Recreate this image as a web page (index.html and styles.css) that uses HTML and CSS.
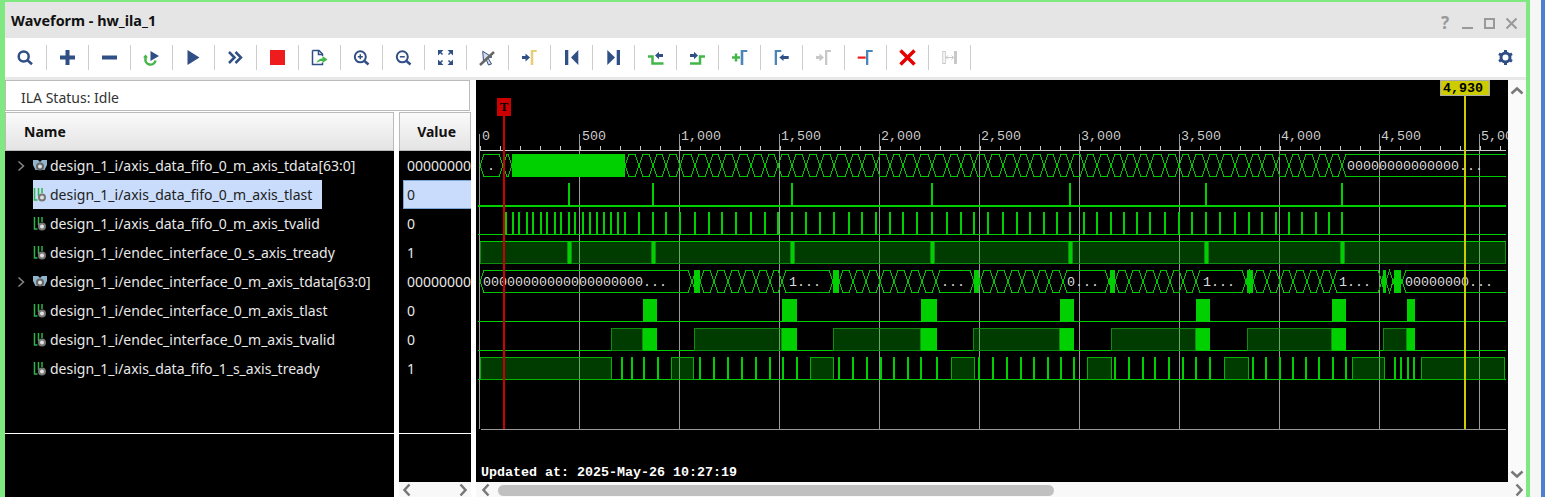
FILE: index.html
```html
<!DOCTYPE html>
<html lang="en">

<head>
    <meta charset="UTF-8">
    <title>Waveform - hw_ila_1</title>
    <link rel="stylesheet" href="styles.css">
</head>

<body>
    <div class="window">
        <div class="titlebar">
            <span class="title">Waveform - hw_ila_1</span>
            <svg class="winbtns" width="76" height="20" viewBox="0 0 76 20">
                <text x="0" y="16" class="help">?</text>
                <path d="M21 15h11" />
                <rect x="44" y="6" width="9" height="9" />
                <path d="M65.500 5.500l10 10M75.500 5.500l-10 10" />
            </svg>
        </div>

        <div class="toolbar">
            <div class="tool"><svg viewBox="0 0 21 21"><circle cx="8.700" cy="9.500" r="5" class="ln" /><path d="M12.500 13.200l4.500 4" class="ln" /></svg></div>
            <div class="tool"><svg viewBox="0 0 21 21"><path d="M3 10.500h15M10.500 3v15" class="ln thick" /></svg></div>
            <div class="tool"><svg viewBox="0 0 21 21"><path d="M3 10.500h15" class="ln thick" /></svg></div>
            <div class="tool"><svg viewBox="0 0 21 21"><path d="M9.500 4l8.500 5-8.500 5z" class="nv" /><path d="M4.500 9v2.500a5 5 0 0 0 10 2" class="gn" /><path d="M2 10.500l2.500-3 2.500 3z" class="gf" /></svg></div>
            <div class="tool"><svg viewBox="0 0 21 21"><path d="M4.500 3L16.500 10.500 4.500 18z" class="nv" /></svg></div>
            <div class="tool"><svg viewBox="0 0 21 21"><path d="M4 5l5.500 5.500L4 16M10.500 5l5.500 5.500-5.500 5.500" class="ln" /></svg></div>
            <div class="tool"><svg viewBox="0 0 21 21"><rect x="3" y="3" width="15" height="15" class="rd" /></svg></div>
            <div class="tool"><svg viewBox="0 0 21 21"><path d="M3.500 3.500h6.500l3.500 3.500v2M13.500 15.500v2h-10v-14" class="ln thin" /><path d="M9.500 3.500v4h4" class="ln thin" /><path d="M7.500 16c1-3 3-4.500 6-4.500V9l5 3.500-5 3.500v-2c-2.500 0-4 .5-6 2z" class="gf" /></svg></div>
            <div class="tool"><svg viewBox="0 0 21 21"><circle cx="9.300" cy="9.800" r="5.500" class="ln mid" /><path d="M6.800 9.800h5M9.300 7.300v5" class="ln thin" /><path d="M13.500 14l4 3.500" class="ln" /></svg></div>
            <div class="tool"><svg viewBox="0 0 21 21"><circle cx="9.300" cy="9.800" r="5.500" class="ln mid" /><path d="M6.800 9.800h5" class="ln thin" /><path d="M13.500 14l4 3.500" class="ln" /></svg></div>
            <div class="tool"><svg viewBox="0 0 21 21"><path d="M3 3h5.500L3 8.500zM18 3v5.500L12.500 3zM3 18v-5.500L8.500 18zM18 18h-5.500L18 12.500z" class="nv" /><path d="M5 5l2.500 2.500M16 5l-2.500 2.500M5 16l2.500-2.500M16 16l-2.500-2.500" class="ln thin" /></svg></div>
            <div class="tool"><svg viewBox="0 0 21 21"><path d="M5.700 4.300L15 10l-4 1 3.500 6-3 1L9 12l-2.500 2z" class="cursor" /><path d="M17 5L3 18" class="slash" /></svg></div>
            <div class="tool"><svg viewBox="0 0 21 21"><path d="M3 9h3.500V6.500l4.500 4-4.500 4V12H3z" class="nv" /><path d="M11.700 18V3h6v2h-3.400v13z" class="yl" /></svg></div>
            <div class="tool"><svg viewBox="0 0 21 21"><rect x="4" y="3" width="3.300" height="15" class="nv" /><path d="M17.300 3L10 10.500l7.300 7.500z" class="nv" /></svg></div>
            <div class="tool"><svg viewBox="0 0 21 21"><rect x="13.700" y="3" width="3.300" height="15" class="nv" /><path d="M4.300 3L12 10.500 4.300 18z" class="nv" /></svg></div>
            <div class="tool"><svg viewBox="0 0 21 21"><path d="M3 9.500h4.500v7h11" class="gn" /><path d="M10 8.500l4-3.800v2.300h4v3h-4v2.300z" class="nv" /></svg></div>
            <div class="tool"><svg viewBox="0 0 21 21"><path d="M3 16.500h10v-7h5" class="gn" /><path d="M3 7h4V4.700l4 3.800-4 3.800V10H3z" class="nv" /></svg></div>
            <div class="tool"><svg viewBox="0 0 21 21"><path d="M3 10.500h8M7 6.500v8" class="gn" /><path d="M11.700 18V3h6.600v2h-4v13z" class="bl" /></svg></div>
            <div class="tool"><svg viewBox="0 0 21 21"><path d="M3.700 18V3h6.600v2H6v13z" class="bl" /><path d="M8.300 10.500l4.200-3.500v2h5.200v3h-5.200v2z" class="nv" /></svg></div>
            <div class="tool"><svg viewBox="0 0 21 21"><path d="M3 9h3.500V6.500l4.500 4-4.500 4V12H3z" class="gr" /><path d="M12 18V3h6v2h-3.700v13z" class="gr" /></svg></div>
            <div class="tool"><svg viewBox="0 0 21 21"><rect x="2.700" y="9.500" width="8" height="2.200" class="rd" /><path d="M11 18V3h6.700v2h-4.400v13z" class="bl" /></svg></div>
            <div class="tool"><svg viewBox="0 0 21 21"><path d="M3.500 3.500l14 14M17.500 3.500l-14 14" class="ln x" /></svg></div>
            <div class="tool"><svg viewBox="0 0 21 21"><rect x="3.800" y="4.500" width="2.500" height="12" class="gbox" /><rect x="15" y="4" width="3" height="13" class="gr" /><path d="M7 10.500h7.500M9 8.500l-2 2 2 2M12.500 8.500l2 2-2 2" class="gline" /></svg></div>
            <svg class="gear" viewBox="0 0 21 21"><circle cx="10.500" cy="10.500" r="4.500" class="gearring" /><path d="M10.500 3v15M4 6.750l13 7.500M4 14.250l13-7.500" class="gearteeth" /></svg>
        </div>
        <div class="divider"></div>

        <div class="main">
            <div class="left">
                <div class="status">ILA Status: Idle</div>
                <div class="columns">
                    <div class="names">
                        <div class="colhead namehead">Name</div>
                        <div class="rows">
                            <div class="row"><span class="chev"><svg width="8" height="12" viewBox="0 0 8 12"><path d="M1.500 1.500l5 4.500-5 4.500" /></svg></span><span class="sig"><svg class="bus-ic" width="14" height="14" viewBox="0 0 14 14"><path d="M0 1h5l2 2 2-2h5v5l-2.500 5h-9L0 6z" /><circle cx="7" cy="7.500" r="3" /></svg><span>design_1_i/axis_data_fifo_0_m_axis_tdata[63:0]</span></span></div>
                            <div class="row"><span class="chev"></span><span class="sig selected"><svg class="bit-ic" width="14" height="14" viewBox="0 0 14 14"><path d="M1.500 0v12h3M5.500 0v8M9 0v5" /><circle cx="9" cy="9.500" r="3" /></svg><span>design_1_i/axis_data_fifo_0_m_axis_tlast</span></span></div>
                            <div class="row"><span class="chev"></span><span class="sig"><svg class="bit-ic" width="14" height="14" viewBox="0 0 14 14"><path d="M1.500 0v12h3M5.500 0v8M9 0v5" /><circle cx="9" cy="9.500" r="3" /></svg><span>design_1_i/axis_data_fifo_0_m_axis_tvalid</span></span></div>
                            <div class="row"><span class="chev"></span><span class="sig"><svg class="bit-ic" width="14" height="14" viewBox="0 0 14 14"><path d="M1.500 0v12h3M5.500 0v8M9 0v5" /><circle cx="9" cy="9.500" r="3" /></svg><span>design_1_i/endec_interface_0_s_axis_tready</span></span></div>
                            <div class="row"><span class="chev"><svg width="8" height="12" viewBox="0 0 8 12"><path d="M1.500 1.500l5 4.500-5 4.500" /></svg></span><span class="sig"><svg class="bus-ic" width="14" height="14" viewBox="0 0 14 14"><path d="M0 1h5l2 2 2-2h5v5l-2.500 5h-9L0 6z" /><circle cx="7" cy="7.500" r="3" /></svg><span>design_1_i/endec_interface_0_m_axis_tdata[63:0]</span></span></div>
                            <div class="row"><span class="chev"></span><span class="sig"><svg class="bit-ic" width="14" height="14" viewBox="0 0 14 14"><path d="M1.500 0v12h3M5.500 0v8M9 0v5" /><circle cx="9" cy="9.500" r="3" /></svg><span>design_1_i/endec_interface_0_m_axis_tlast</span></span></div>
                            <div class="row"><span class="chev"></span><span class="sig"><svg class="bit-ic" width="14" height="14" viewBox="0 0 14 14"><path d="M1.500 0v12h3M5.500 0v8M9 0v5" /><circle cx="9" cy="9.500" r="3" /></svg><span>design_1_i/endec_interface_0_m_axis_tvalid</span></span></div>
                            <div class="row"><span class="chev"></span><span class="sig"><svg class="bit-ic" width="14" height="14" viewBox="0 0 14 14"><path d="M1.500 0v12h3M5.500 0v8M9 0v5" /><circle cx="9" cy="9.500" r="3" /></svg><span>design_1_i/axis_data_fifo_1_s_axis_tready</span></span></div>
                        </div>
                        <div class="rows-foot"></div>
                    </div>
                    <div class="values">
                        <div class="colhead valuehead">Value</div>
                        <div class="rows">
                            <div class="val">00000000</div>
                            <div class="val selected">0</div>
                            <div class="val">0</div>
                            <div class="val">1</div>
                            <div class="val">00000000</div>
                            <div class="val">0</div>
                            <div class="val">0</div>
                            <div class="val">1</div>
                        </div>
                        <div class="rows-foot"></div>
                        <div class="hscroll small">
                            <svg width="10" height="14" viewBox="0 0 10 14"><path d="M7.500 1.500L2.500 7l5 5.500" /></svg>
                            <svg width="10" height="14" viewBox="0 0 10 14"><path d="M2.500 1.500L7.500 7l-5 5.500" /></svg>
                        </div>
                    </div>
                </div>
            </div>

            <div class="right">
                <div class="wave-row">
                    <svg id="wave" class="wave" width="1032" height="402" viewBox="476 80 1032 402">
                        <g id="grid"></g>
                        <g id="signals"></g>
                        <g class="ruler">
                            <text x="482" y="140">0</text>
                            <text x="582" y="140">500</text>
                            <text x="681" y="140">1,000</text>
                            <text x="781" y="140">1,500</text>
                            <text x="881" y="140">2,000</text>
                            <text x="981" y="140">2,500</text>
                            <text x="1081" y="140">3,000</text>
                            <text x="1181" y="140">3,500</text>
                            <text x="1281" y="140">4,000</text>
                            <text x="1381" y="140">4,500</text>
                            <text x="1481" y="140">5,00</text>
                        </g>
                        <g class="buslabel">
                            <text x="487" y="170">.</text>
                            <text x="1347" y="170">00000000000000...</text>
                            <text x="483" y="286">00000000000000000000...</text>
                            <text x="789" y="286">1...</text>
                            <text x="941" y="286">...</text>
                            <text x="1067" y="286">0...</text>
                            <text x="1203" y="286">1...</text>
                            <text x="1339" y="286">1...</text>
                            <text x="1405" y="286">00000000...</text>
                        </g>
                        <rect x="503" y="116" width="2" height="313" class="red" />
                        <rect x="497" y="98" width="14" height="18" class="red" />
                        <text x="504" y="111" class="markt">T</text>
                        <rect x="1464" y="96" width="2" height="333" class="yel" />
                        <rect x="1440.500" y="80.500" width="49" height="15" class="yelbox" />
                        <text x="1443" y="92" class="markv">4,930</text>
                        <text x="481" y="476" class="updated">Updated at: 2025-May-26 10:27:19</text>
                    </svg>
                    <div class="vscroll">
                        <svg width="14" height="10" viewBox="0 0 14 10"><path d="M1.500 7.500L7 2.500l5.500 5" /></svg>
                        <svg width="14" height="10" viewBox="0 0 14 10"><path d="M1.500 2.500L7 7.500l5.500-5" /></svg>
                    </div>
                </div>
                <div class="hscroll">
                    <svg width="10" height="14" viewBox="0 0 10 14"><path d="M7.500 1.500L2.500 7l5 5.500" /></svg>
                    <div class="thumb"></div>
                    <svg width="10" height="14" viewBox="0 0 10 14"><path d="M2.500 1.500L7.500 7l-5 5.500" /></svg>
                </div>
            </div>
        </div>
    </div>
    <div class="gutter"></div>
    <div class="blue"></div>

    <script src="wave.js"></script>
</body>

</html>
```

FILE: styles.css
```css
html, body {
    margin: 0;
    padding: 0;
    height: 497px;
    overflow: hidden;
    background-color: #fff;
}
body {
    display: flex;
    font-family: 'Noto Sans', sans-serif;
    color: #222;
}
.window {
    width: 1521px;
    height: 495px;
    flex: none;
    border-top: 2px solid #80e880;
    border-left: 5px solid #80e880;
    border-right: 4px solid #80e880;
    display: flex;
    flex-direction: column;
    background-color: #fff;
}
.gutter {
    width: 11px;
    background-color: #f6f6f6;
}
.blue {
    width: 4px;
    background-color: #4d7fd0;
}

/* title bar */
.titlebar {
    height: 36px;
    flex: none;
    background-color: #e5e5e5;
    display: flex;
    align-items: center;
    justify-content: space-between;
    padding: 0 9px 0 6px;
}
.title {
    font-size: 14.4px;
    font-weight: bold;
    color: #111;
}
.winbtns {
    margin-top: 6px;
}
.winbtns path {
    stroke: #999;
    stroke-width: 2;
    fill: none;
}
.winbtns rect {
    stroke: #999;
    stroke-width: 2;
    fill: none;
}
.winbtns .help {
    font-size: 17px;
    font-weight: bold;
    fill: #999;
}

/* toolbar */
.toolbar {
    height: 39px;
    flex: none;
    display: flex;
    align-items: center;
    background-color: #fff;
}
.tool {
    width: 41px;
    height: 25px;
    flex: none;
    display: flex;
    align-items: center;
    justify-content: center;
    border-right: 1px solid #ccc;
}
.tool svg, .gear {
    width: 21px;
    height: 21px;
    flex: none;
}
.gear {
    margin-left: auto;
    margin-right: 10px;
}
.gearring {
    fill: none;
    stroke: #2f4f85;
    stroke-width: 3;
}
.gearteeth {
    stroke: #2f4f85;
    stroke-width: 3;
    stroke-dasharray: 3 9;
}
.ln {
    fill: none;
    stroke: #2f4f85;
    stroke-width: 2.5;
}
.ln.thick {
    stroke-width: 4;
}
.ln.mid {
    stroke-width: 2;
}
.ln.thin {
    stroke-width: 1.5;
}
.ln.x {
    stroke: #e60000;
    stroke-width: 3.5;
}
.nv {
    fill: #2f4f85;
}
.rd {
    fill: #ee1c1c;
}
.gn {
    fill: none;
    stroke: #43b649;
    stroke-width: 2.5;
}
.gf {
    fill: #43b649;
}
.yl {
    fill: #e6cf7a;
}
.bl {
    fill: #4a86b8;
}
.gr {
    fill: #c8c8c8;
}
.gbox {
    fill: none;
    stroke: #c8c8c8;
}
.gline {
    fill: none;
    stroke: #c8c8c8;
}
.cursor {
    fill: #d5dcea;
    stroke: #2f4f85;
}
.slash {
    stroke: #666;
    stroke-width: 2.5;
}
.divider {
    height: 3px;
    flex: none;
    background-color: #e8e8e8;
}

/* main area */
.main {
    flex: 1;
    min-height: 0;
    display: flex;
}
.left {
    width: 471px;
    flex: none;
    display: flex;
    flex-direction: column;
}
.status {
    height: 29px;
    width: 448px;
    flex: none;
    border: 1px solid #bbb;
    padding-left: 15px;
    font-size: 14px;
    line-height: 34px;
    color: #333;
}
.columns {
    flex: 1;
    min-height: 0;
    margin-top: 1px;
    display: flex;
    gap: 5px;
}
.names {
    width: 389px;
    flex: none;
    display: flex;
    flex-direction: column;
    background-color: #000;
}
.values {
    width: 72px;
    flex: none;
    display: flex;
    flex-direction: column;
}
.colhead {
    height: 37px;
    flex: none;
    box-sizing: content-box;
    border: 1px solid #bbb;
    background: linear-gradient(#fafafa, #e4e4e4);
    font-size: 14px;
    font-weight: bold;
    line-height: 37px;
    color: #111;
}
.namehead {
    padding-left: 18px;
}
.valuehead {
    text-align: right;
    padding-right: 14px;
}
.rows {
    height: 282px;
    flex: none;
    background-color: #000;
}
.rows-foot {
    flex: 1;
    min-height: 0;
    background-color: #000;
    border-top: 1px solid #fff;
}
.row, .val {
    height: 29px;
    line-height: 29px;
    font-size: 14px;
    white-space: nowrap;
}
.row {
    display: flex;
    color: #e8e8e8;
}
.chev {
    width: 28px;
    flex: none;
    display: flex;
    align-items: center;
    justify-content: flex-end;
    padding-right: 8px;
    box-sizing: border-box;
}
.chev svg path {
    fill: none;
    stroke: #888;
    stroke-width: 1.5;
}
.sig {
    display: flex;
    align-items: center;
    gap: 3px;
    color: #e8e8e8;
}
.sig.selected {
    background-color: #c9dcfb;
    color: #222;
    width: 289px;
}
.bit-ic path {
    fill: none;
    stroke: #2fb34a;
    stroke-width: 1.5;
}
.bit-ic circle {
    fill: #e0e0e0;
    stroke: #777;
    stroke-width: 2;
}
.bus-ic path {
    fill: #8fb4cc;
}
.bus-ic circle {
    fill: #e0e0e0;
    stroke: #666;
    stroke-width: 2;
}
.val {
    color: #e8e8e8;
    padding-left: 8px;
    overflow: hidden;
}
.val.selected {
    margin-left: 4px;
    padding-left: 3px;
    height: 27px;
    line-height: 27px;
    border: 1px solid #7aa7d8;
    border-right: none;
    background-color: #c9dcfb;
    color: #222;
}

/* waveform area */
.right {
    flex: 1;
    min-width: 0;
    display: flex;
    flex-direction: column;
}
.wave-row {
    flex: 1;
    min-height: 0;
    display: flex;
}
.wave {
    display: block;
    flex: none;
    background-color: #000;
}
.vscroll {
    flex: 1;
    display: flex;
    flex-direction: column;
    justify-content: space-between;
    align-items: center;
    padding: 6px 0 3px;
    background-color: #fafafa;
}
.vscroll path, .hscroll path {
    fill: none;
    stroke: #777;
    stroke-width: 2.5;
}
.hscroll {
    height: 15px;
    flex: none;
    display: flex;
    align-items: center;
    padding: 0 2px 0 5px;
    gap: 7px;
    background-color: #f8f8f8;
}
.hscroll.small {
    justify-content: space-between;
    padding: 0 3px;
}
.thumb {
    width: 556px;
    height: 11px;
    margin-top: 2px;
    margin-right: auto;
    border-radius: 6px;
    background-color: #c0c0c0;
}
.ruler text, .buslabel text, .markv, .updated {
    font-family: 'Liberation Mono', monospace;
    font-size: 13.33px;
}
.ruler text {
    fill: #ccc;
}
.buslabel text {
    fill: #ddd;
}
.updated {
    fill: #fff;
    font-weight: bold;
}
.red {
    fill: #cc0000;
}
.yel {
    fill: #cccc00;
}
.yelbox {
    fill: #cccc00;
    stroke: #aaa;
}
.markt {
    font-family: 'Liberation Serif', serif;
    font-size: 13px;
    font-weight: bold;
    text-anchor: middle;
    fill: #000;
}
.markv {
    font-weight: bold;
    fill: #000;
}
.gridline {
    stroke: #999;
    fill: none;
    shape-rendering: crispEdges;
}
.rulerline {
    stroke: #ccc;
    fill: none;
    shape-rendering: crispEdges;
}
.trace {
    stroke: #00c800;
    fill: none;
    shape-rendering: crispEdges;
}
.solid {
    fill: #00d000;
    shape-rendering: crispEdges;
}
.high {
    fill: rgba(0, 200, 0, 0.3);
    stroke: #0e8e0e;
    shape-rendering: crispEdges;
}
.high.strong {
    stroke: #00b400;
}
```

FILE: wave.js
```js
// draws the ILA traces, positions are page x coordinates
const NS = 'http://www.w3.org/2000/svg';
const grid = document.getElementById('grid');
const signals = document.getElementById('signals');

function add(parent, tag, attrs) {
    const el = document.createElementNS(NS, tag);
    for (const k in attrs) el.setAttribute(k, attrs[k]);
    parent.appendChild(el);
}

const END = 1506;
const tops = [154, 183, 212, 241, 270, 299, 328, 357];
const H = 23;

// ruler and grid
let minor = '';
for (let x = 480; x < END; x += 20) minor += `M${x + 0.5} 146V150`;
let major = '';
for (let x = 479; x < END; x += 100) major += `M${x + 0.5} 134V429`;
add(grid, 'path', { d: `M481 429.5H${END}`, class: 'gridline' });
add(grid, 'path', { d: major, class: 'gridline' });
add(grid, 'path', { d: `${minor}M480 150.5H${END}`, class: 'rulerline' });

const valid = [505, 512, 518, 526, 532, 540, 546, 554, 560, 568, 574, 582, 589, 596, 603, 610, 617, 624,
    638, 652, 665, 679, 694, 708, 721, 735, 750, 764, 777, 791, 805, 819, 833, 848, 861, 875, 889, 902,
    916, 931, 946, 960, 973, 987, 1002, 1016, 1029, 1043, 1056, 1069, 1083, 1096, 1110, 1123, 1136, 1149,
    1164, 1178, 1191, 1205, 1219, 1234, 1248, 1261, 1275, 1288, 1301, 1315, 1328, 1341];
const last = [568, 652, 791, 931, 1069, 1205, 1341];

function blocks(top, spans) {
    spans.forEach(([x1, x2]) => add(signals, 'rect', { x: x1, y: top, width: x2 - x1, height: H, class: 'solid' }));
}

// bus trace: hexagon between each pair of transitions, last one runs off the end
function bus(top, points, solid) {
    const a = top + 0.5, b = top + H - 0.5, m = top + H / 2;
    let d = '';
    for (let i = 0; i < points.length - 1; i++) {
        const x1 = points[i], x2 = points[i + 1], s = Math.min(4, (x2 - x1) / 2);
        d += `M${x1} ${m}L${x1 + s} ${a}H${x2 - s}L${x2} ${m}L${x2 - s} ${b}H${x1 + s}Z`;
    }
    const x = points[points.length - 1];
    d += `M${x} ${m}L${x + 4} ${a}H${END}M${x} ${m}L${x + 4} ${b}H${END}`;
    add(signals, 'path', { d, class: 'trace' });
    blocks(top, solid);
}

function baseline(top, thick) {
    add(signals, 'rect', { x: 478, y: top + H - 1, width: END - 478, height: thick ? 2 : 1, class: 'solid' });
}
function pulses(top, xs) {
    xs.forEach(x => add(signals, 'rect', { x, y: top, width: 2, height: H, class: 'solid' }));
}
function highs(top, spans, cls) {
    spans.forEach(([x1, x2]) => add(signals, 'rect', { x: x1 + 0.5, y: top + 0.5, width: x2 - x1 - 1, height: H - 1, class: cls }));
}

// row 1
bus(tops[0], [480, 503, 512, 625].concat(valid.filter(x => x > 625).map(x => x + 1)), [[512, 625]]);

// row 2, 3
baseline(tops[1], true);
pulses(tops[1], last);
baseline(tops[2], false);
pulses(tops[2], valid);

// row 4
highs(tops[3], [[480, 568], [571, 652], [655, 791], [794, 931], [934, 1069], [1072, 1205], [1208, 1341], [1344, 1506]], 'high');
blocks(tops[3], last.map(x => [x, x + 3]));
add(signals, 'rect', { x: 480, y: tops[3], width: END - 480, height: 1, class: 'solid' });

// row 5
bus(tops[4], [480, 692, 700, 714, 728, 742, 756, 770, 782, 833, 839, 853, 866, 880, 894, 908, 922, 936, 974, 980,
    994, 1008, 1022, 1036, 1049, 1063, 1109, 1115, 1129, 1143, 1157, 1170, 1183, 1196, 1246, 1253, 1267, 1280,
    1293, 1307, 1320, 1333, 1382, 1386, 1393, 1402],
    [[694, 700], [833, 839], [974, 979], [1110, 1115], [1247, 1253], [1383, 1386], [1394, 1401]]);

// row 6
const lastBlocks = [[643, 657], [782, 797], [921, 937], [1060, 1074], [1196, 1210], [1332, 1346], [1407, 1415]];
baseline(tops[5], false);
blocks(tops[5], lastBlocks);

// row 7
baseline(tops[6], false);
highs(tops[6], [[611, 643], [694, 782], [833, 921], [973, 1060], [1111, 1196], [1247, 1332], [1383, 1407]], 'high');
blocks(tops[6], lastBlocks);

// row 8
baseline(tops[7], false);
highs(tops[7], [[480, 612], [671, 694], [810, 834], [951, 975], [1087, 1112], [1224, 1249], [1352, 1385], [1421, 1505]], 'high strong');
pulses(tops[7], [621, 631, 643, 657, 699, 713, 727, 741, 755, 769, 782, 796, 838, 852, 866, 880, 893, 907, 920, 936,
    978, 992, 1006, 1020, 1033, 1047, 1060, 1073, 1114, 1128, 1142, 1154, 1168, 1182, 1195, 1209, 1252, 1265, 1279,
    1292, 1305, 1318, 1332, 1345, 1394, 1400, 1407, 1413]);
```
